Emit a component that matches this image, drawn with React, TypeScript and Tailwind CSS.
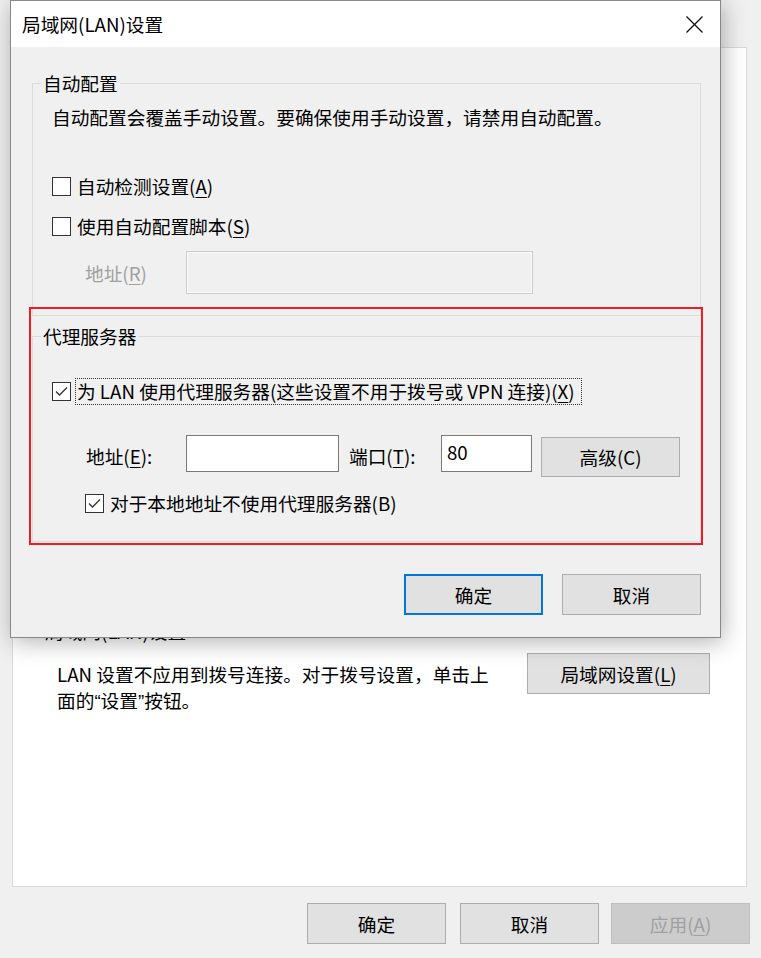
import React from "react";

const FONT = "font-['Noto_Sans_CJK_SC','Microsoft_YaHei',sans-serif]";

function Box({ checked }: { checked?: boolean }) {
  return (
    <span className="w-[19px] h-[19px] shrink-0 border border-[#333333] bg-white flex items-center justify-center">
      {checked && (
        <svg width="17" height="17" viewBox="0 0 17 17">
          <polyline points="3,8.5 6.5,12 14,4.5" fill="none" stroke="#333333" strokeWidth="1.3" />
        </svg>
      )}
    </span>
  );
}

function Btn({
  children,
  w = "w-[139px]",
  h = "h-[41px]",
  border = "border border-[#adadad]",
  bg = "bg-[#e1e1e1]",
  extra = "",
}: {
  children: React.ReactNode;
  w?: string;
  h?: string;
  border?: string;
  bg?: string;
  extra?: string;
}) {
  return (
    <div className={`${w} ${h} ${bg} ${border} flex items-center justify-center leading-[24px] ${extra}`}>
      {children}
    </div>
  );
}

export default function App() {
  return (
    <div className={`relative w-[761px] h-[958px] overflow-hidden bg-[#f0f0f0] text-[18.7px] text-black ${FONT}`}>
      {/* background window */}
      <div className="pt-[47px] pl-[12px]">
        <div className="w-[735px] h-[840px] bg-white border border-[#dadada]">
          <div className="h-[571px]" />
          <div className="pl-[32px] leading-[24px]">局域网(LAN)设置</div>
          <div className="mt-[10px] flex items-start">
            <div className="pl-[44px] mt-[8px] leading-[26px] whitespace-nowrap">
              LAN 设置不应用到拨号连接。对于拨号设置，单击上
              <br />
              面的<span className="font-['Liberation_Sans',sans-serif]">“</span>设置<span className="font-['Liberation_Sans',sans-serif]">”</span>按钮。
            </div>
            <div className="ml-auto mr-[36px]">
              <Btn w="w-[183px]">
                局域网设置(<u className="underline-offset-[3px]">L</u>)
              </Btn>
            </div>
          </div>
        </div>
        <div className="mt-[16px] flex justify-end pr-[11px]">
          <Btn>确定</Btn>
          <Btn extra="ml-[14px]">取消</Btn>
          <Btn extra="ml-[12px] text-[#a0a0a0]" bg="bg-[#cccccc]" border="border border-[#bfbfbf]">
            应用(<u className="underline-offset-[3px]">A</u>)
          </Btn>
        </div>
      </div>

      {/* LAN dialog */}
      <div className="absolute left-[10px] top-0 w-[711px] h-[638px] border border-[#888888] bg-[#f0f0f0] shadow-[2px_4px_22px_rgba(0,0,0,0.3)] flex flex-col">
        <div className="h-[46px] bg-white flex items-center pl-[11px] pr-[17px]">
          <span className="leading-[24px]">局域网(LAN)设置</span>
          <svg className="ml-auto" width="17" height="17" viewBox="0 0 17 17">
            <line x1="0.5" y1="0.5" x2="16.5" y2="16.5" stroke="#111" strokeWidth="1.2" />
            <line x1="16.5" y1="0.5" x2="0.5" y2="16.5" stroke="#111" strokeWidth="1.2" />
          </svg>
        </div>
        <div className="flex-1 pt-[24px] pl-[21px] pr-[19px]">
          <fieldset className="w-[669px] border border-[#dcdcdc] pb-[21px]">
            <legend className="ml-[8px] px-[2px] leading-[24px]">自动配置</legend>
            <div className="pl-[19px]">
              <div className="mt-[10px] leading-[24px] whitespace-nowrap">
                自动配置会覆盖手动设置。要确保使用手动设置，请禁用自动配置。
              </div>
              <div className="mt-[45px] h-[24px] flex items-center">
                <Box />
                <span className="ml-[6px] leading-[24px]">
                  自动检测设置(<u className="underline-offset-[3px]">A</u>)
                </span>
              </div>
              <div className="mt-[16px] h-[24px] flex items-center">
                <Box />
                <span className="ml-[6px] leading-[24px]">
                  使用自动配置脚本(<u className="underline-offset-[3px]">S</u>)
                </span>
              </div>
              <div className="mt-[13px] flex items-center pl-[33px]">
                <span className="w-[101px] leading-[24px] text-[#a0a0a0]">
                  地址(<u className="underline-offset-[3px]">R</u>)
                </span>
                <div className="w-[347px] h-[43px] bg-[#f0f0f0] border border-[#cccccc] shadow-[inset_0_0_0_1px_#fafafa]" />
              </div>
            </div>
          </fieldset>

          <fieldset className="mt-[8px] w-[669px] border border-[#dcdcdc] pb-[26px]">
            <legend className="ml-[8px] px-[2px] leading-[24px]">代理服务器</legend>
            <div className="pl-[19px]">
              <div className="mt-[30px] h-[27px] flex items-center">
                <Box checked />
                <span className="ml-[4px] h-[27px] pl-[1px] pr-[6px] border border-dotted border-[#333333] leading-[24px] whitespace-nowrap">
                  为 LAN 使用代理服务器(这些设置不用于拨号或 VPN 连接)(<u className="underline-offset-[3px]">X</u>)
                </span>
              </div>
              <div className="mt-[30px] h-[42px] flex items-center pl-[34px]">
                <span className="w-[100px] leading-[24px]">
                  地址(<u className="underline-offset-[3px]">E</u>):
                </span>
                <div className="self-start w-[153px] h-[37px] bg-white border border-[#7a7a7a]" />
                <span className="ml-[10px] w-[92px] leading-[24px]">
                  端口(<u className="underline-offset-[3px]">T</u>):
                </span>
                <div className="self-start w-[91px] h-[37px] bg-white border border-[#7a7a7a] pl-[5px] leading-[32px]">
                  80
                </div>
                <div className="ml-[9px] self-end">
                  <Btn h="h-[40px]">高级(C)</Btn>
                </div>
              </div>
              <div className="mt-[14px] h-[24px] flex items-center pl-[33px]">
                <Box checked />
                <span className="ml-[6px] leading-[24px]">对于本地地址不使用代理服务器(B)</span>
              </div>
            </div>
          </fieldset>

          <div className="mt-[32px] flex justify-end gap-[19px]">
            <Btn border="border-2 border-[#0078d7]">确定</Btn>
            <Btn>取消</Btn>
          </div>
        </div>
      </div>

      {/* red annotation box */}
      <div className="absolute left-[29px] top-[307px] w-[674px] h-[238px] border-2 border-[#ee1c25]" />
    </div>
  );
}
